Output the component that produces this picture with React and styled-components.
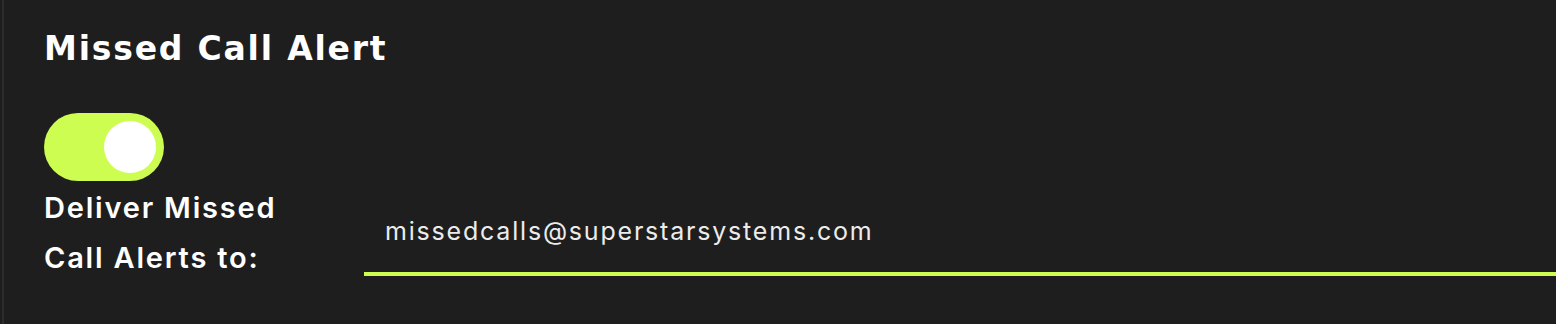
import React, { useState } from "react";
import styled, { createGlobalStyle } from "styled-components";

const Global = createGlobalStyle`
  html, body { margin: 0; padding: 0; background: #1e1e1e; }
  body { font-family: Inter, "Open Sans", sans-serif; }
  * { box-sizing: border-box; }
`;

const Panel = styled.section`
  min-height: 324px;
  margin-left: 2px;
  border-left: 2px solid #2d2d2d;
  padding: 28px 0 0 40px;
  background: #1e1e1e;
  color: #ffffff;
`;

const Title = styled.h2`
  margin: 0;
  font-family: "DejaVu Sans", Inter, sans-serif;
  font-size: 33px;
  font-weight: 700;
  line-height: 42px;
  letter-spacing: 1.8px;
  color: #ffffff;
`;

const Switch = styled.button`
  display: flex;
  align-items: center;
  justify-content: ${(p) => (p.$on ? "flex-end" : "flex-start")};
  width: 120px;
  height: 68px;
  margin-top: 43px;
  padding: 0 8px;
  border: none;
  border-radius: 34px;
  background: ${(p) => (p.$on ? "#cdfd50" : "#444")};
  cursor: pointer;
`;

const Knob = styled.span`
  width: 52px;
  height: 52px;
  border-radius: 50%;
  background: #ffffff;
`;

const Row = styled.div`
  display: flex;
  align-items: flex-end;
  margin-top: 2px;
`;

const Label = styled.label`
  width: 320px;
  flex: none;
  font-family: Inter, sans-serif;
  font-size: 29px;
  font-weight: 600;
  line-height: 50px;
  letter-spacing: 1.8px;
  color: #ffffff;
`;

const Field = styled.input`
  flex: 1;
  min-width: 0;
  height: 74px;
  margin-bottom: 7px;
  padding: 0 0 12px 21px;
  border: none;
  border-bottom: 4px solid #cdfd50;
  background: transparent;
  color: #ececec;
  font-family: Inter, sans-serif;
  font-size: 25px;
  font-weight: 400;
  letter-spacing: 1.8px;
  outline: none;
`;

export default function App() {
  const [on, setOn] = useState(true);
  const [email, setEmail] = useState("missedcalls@superstarsystems.com");
  return (
    <>
      <Global />
      <Panel>
        <Title>Missed Call Alert</Title>
        <Switch $on={on} onClick={() => setOn(!on)} aria-pressed={on}>
          <Knob />
        </Switch>
        <Row>
          <Label htmlFor="alert-email">
            Deliver Missed
            <br />
            Call Alerts to:
          </Label>
          <Field id="alert-email" value={email} onChange={(e) => setEmail(e.target.value)} />
        </Row>
      </Panel>
    </>
  );
}
